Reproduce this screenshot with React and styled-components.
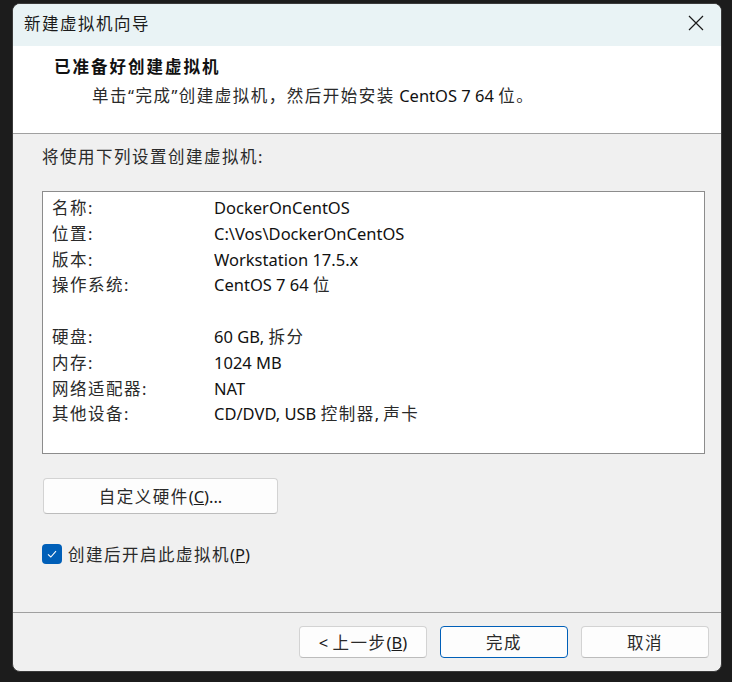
import styled, { createGlobalStyle } from "styled-components"

const GlobalStyle = createGlobalStyle`
    html, body, #root {
        margin: 0;
        padding: 0;
        height: 100%;
    }
    body {
        background-color: #1c1c1c;
        font-family: "Noto Sans", "Noto Sans CJK SC", sans-serif;
        font-size: 16.5px;
        color: #1a1a1a;
    }
`

// CJK runs are set a bit wider than the Latin ones, as in the original dialog
const Han = styled.span`
    letter-spacing: 1.5px;
    color: #2a2a2a;
`

const settings = [
    { label: "名称:", value: "DockerOnCentOS" },
    { label: "位置:", value: "C:\\Vos\\DockerOnCentOS" },
    { label: "版本:", value: "Workstation 17.5.x" },
    { label: "操作系统:", value: <>CentOS 7 64 <Han>位</Han></> },
    { label: "", value: "" },
    { label: "硬盘:", value: <>60 GB, <Han>拆分</Han></> },
    { label: "内存:", value: "1024 MB" },
    { label: "网络适配器:", value: "NAT" },
    { label: "其他设备:", value: <>CD/DVD, USB <Han>控制器</Han>, <Han>声卡</Han></> },
]

export default function App(){
    return (
        <>
            <GlobalStyle />
            <Dialog>
                <TitleBar>
                    <span>新建虚拟机向导</span>
                    <CloseButton aria-label="关闭">
                        <svg width="16" height="16" viewBox="0 0 16 16">
                            <path d="M1 1 L15 15 M15 1 L1 15" stroke="#1a1a1a" strokeWidth="1.2" fill="none" />
                        </svg>
                    </CloseButton>
                </TitleBar>
                <Header>
                    <HeaderTitle>已准备好创建虚拟机</HeaderTitle>
                    <HeaderText>
                        <Han>单击“完成”创建虚拟机，然后开始安装</Han> CentOS 7 64 <Han>位。</Han>
                    </HeaderText>
                </Header>
                <Body>
                    <Intro>将使用下列设置创建虚拟机:</Intro>
                    <SummaryBox>
                        {settings.map((s, i) => (
                            <Row key={i}>
                                <Label>{s.label}</Label>
                                <Value>{s.value}</Value>
                            </Row>
                        ))}
                    </SummaryBox>
                    <CustomButton><Han>自定义硬件</Han>(<u>C</u>)...</CustomButton>
                    <CheckRow>
                        <CheckBox>
                            <svg width="12" height="12" viewBox="0 0 12 12">
                                <path d="M2 6.3 L4.8 9 L10 3.2" stroke="#ffffff" strokeWidth="1.1" fill="none" />
                            </svg>
                        </CheckBox>
                        <span><Han>创建后开启此虚拟机</Han>(<u>P</u>)</span>
                    </CheckRow>
                </Body>
                <Footer>
                    <FooterButton>&lt; <Han>上一步</Han>(<u>B</u>)</FooterButton>
                    <FooterButton $primary><Han>完成</Han></FooterButton>
                    <FooterButton><Han>取消</Han></FooterButton>
                </Footer>
            </Dialog>
        </>
    )
}

const Dialog = styled.div`
    box-sizing: border-box;
    width: 710px;
    height: 669px;
    margin: 3px 10px 0 12px;
    display: flex;
    flex-direction: column;
    background-color: #f0f0f0;
    border: 1px solid #3a3a3a;
    border-radius: 8px;
    overflow: hidden;
`

const TitleBar = styled.div`
    height: 42px;
    flex-shrink: 0;
    box-sizing: border-box;
    display: flex;
    align-items: center;
    justify-content: space-between;
    padding: 0 0 4px 11px;
    background-color: #e9f3f5;
    letter-spacing: 1.5px;
    color: #1a1a1a;
`

const CloseButton = styled.button`
    width: 46px;
    height: 38px;
    border: 0;
    background: transparent;
    display: flex;
    align-items: center;
    justify-content: center;
    padding: 0;
    margin-right: 2px;
`

const Header = styled.div`
    height: 88px;
    flex-shrink: 0;
    box-sizing: border-box;
    background-color: #ffffff;
    border-bottom: 1px solid #a0a0a0;
    padding: 10px 0 0 41px;
`

const HeaderTitle = styled.div`
    font-weight: 700;
    line-height: 22px;
    letter-spacing: 2px;
    color: #111111;
`

const HeaderText = styled.div`
    line-height: 22px;
    margin-top: 7px;
    padding-left: 38px;
    color: #111111;
`

const Body = styled.div`
    flex: 1;
    padding: 12px 16px 0 29px;
    display: flex;
    flex-direction: column;
    align-items: flex-start;
`

const Intro = styled.div`
    line-height: 22px;
    letter-spacing: 1.5px;
    color: #2a2a2a;
`

const SummaryBox = styled.div`
    box-sizing: border-box;
    width: 663px;
    height: 263px;
    margin-top: 23px;
    background-color: #ffffff;
    border: 1px solid #8c8c8c;
    padding: 3px 0 0 9px;
`

const Row = styled.div`
    display: grid;
    grid-template-columns: 162px 1fr;
    height: 25.8px;
    line-height: 25.8px;
`

const Label = styled.span`
    letter-spacing: 1.5px;
    color: #2a2a2a;
`

const Value = styled.span`
    color: #111111;
`

const CustomButton = styled.button`
    box-sizing: border-box;
    width: 235px;
    height: 36px;
    margin-top: 24px;
    margin-left: 1px;
    border: 1px solid #d3d3d3;
    border-bottom-color: #bcbcbc;
    border-radius: 4px;
    background-color: #fdfdfd;
    font-family: inherit;
    font-size: inherit;
    color: #1a1a1a;
    padding: 0;
`

const CheckRow = styled.div`
    display: flex;
    align-items: center;
    gap: 6px;
    margin-top: 28px;
    color: #1a1a1a;
`

const CheckBox = styled.span`
    width: 20px;
    height: 20px;
    border-radius: 4px;
    background-color: #005fb8;
    display: flex;
    align-items: center;
    justify-content: center;
`

const Footer = styled.div`
    height: 59px;
    flex-shrink: 0;
    box-sizing: border-box;
    border-top: 1px solid #a0a0a0;
    display: flex;
    justify-content: flex-end;
    align-items: flex-start;
    gap: 13px;
    padding: 13px 12px 0 0;
`

const FooterButton = styled.button`
    box-sizing: border-box;
    width: 128px;
    height: 32px;
    border: 1px solid ${props => props.$primary ? "#005fb8" : "#d3d3d3"};
    border-bottom-color: ${props => props.$primary ? "#005fb8" : "#bcbcbc"};
    border-radius: 4px;
    background-color: #fdfdfd;
    font-family: inherit;
    font-size: inherit;
    color: #1a1a1a;
    padding: 0;
`
